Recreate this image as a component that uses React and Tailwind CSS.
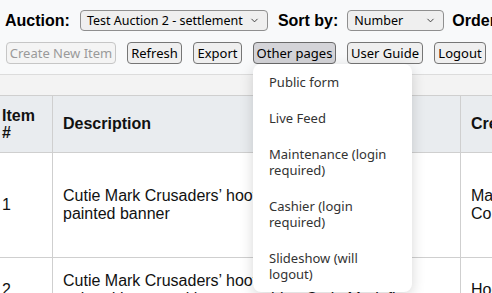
import React from 'react';
import { ChevronDown } from 'lucide-react';

const uiFont = { fontFamily: '"Noto Sans", "Open Sans", sans-serif' };

const FakeSelect = ({ value, width }) => (
  <div
    className={`flex h-[21px] items-center justify-between rounded-[4px] border border-[#8f8f8f] bg-[#efefef] pl-[6px] pr-[7px] text-[12.5px] leading-[19px] text-black ${width}`}
    style={uiFont}
  >
    <span className="whitespace-nowrap">{value}</span>
    <ChevronDown size={11} strokeWidth={2} className="shrink-0 text-[#333]" />
  </div>
);

const Button = ({ label, width, pressed, disabled }) => {
  let look = 'border-[#767676] bg-[#efefef] text-black';
  if (pressed) look = 'border-[#6b6b6b] bg-[#d4d4d8] text-black';
  if (disabled) look = 'border-[#c6c6c6] bg-[#f4f4f4] text-[#9a9a9a]';
  return (
    <button
      disabled={disabled}
      className={`flex h-[22px] shrink-0 items-center justify-center rounded-[4px] border text-[13px] leading-[20px] ${look} ${width}`}
      style={uiFont}
    >
      {label}
    </button>
  );
};

const menuItems = [
  'Public form',
  'Live Feed',
  'Maintenance (login required)',
  'Cashier (login required)',
  'Slideshow (will logout)',
];

const rows = [
  {
    id: 1,
    desc: 'Cutie Mark Crusaders’ hoofprint autographed painted\u00a0banner',
    creator: 'Mane Street Collectibles',
    height: 'h-[105px]',
  },
  {
    id: 2,
    desc: 'Cutie Mark Crusaders’ hoofprint autographed painted\u00a0banner with two matching Cutie Mark figures',
    creator: 'Hoofington',
    height: 'h-[64px]',
  },
];

export default function App() {
  return (
    <div
      className="relative h-[293px] w-[492px] overflow-hidden bg-white"
      style={{ fontFamily: '"Liberation Sans", Arial, sans-serif' }}
    >
      <div className="w-max min-w-full border-b border-[#dcdcdc] bg-[#f8f9fa] px-[5px] pt-[10px] pb-[10px]">
        <div className="flex items-center whitespace-nowrap leading-[21px]">
          <span className="text-[16px] font-bold text-black">Auction:</span>
          <div className="ml-[10px]">
            <FakeSelect value="Test Auction 2 - settlement" width="w-[188px]" />
          </div>
          <span className="ml-[10px] text-[16px] font-bold text-black">Sort by:</span>
          <div className="ml-[9px]">
            <FakeSelect value="Number" width="w-[97px]" />
          </div>
          <span className="ml-[8px] text-[16px] font-bold text-black">Order:</span>
          <div className="ml-[9px]">
            <FakeSelect value="Ascending" width="w-[97px]" />
          </div>
        </div>
        <div className="mt-[11px] flex gap-[11px] pl-[1px]">
          <Button label="Create New Item" width="w-[110px]" disabled />
          <Button label="Refresh" width="w-[55px]" />
          <Button label="Export" width="w-[49px]" />
          <Button label="Other pages" width="w-[83px]" pressed />
          <Button label="User Guide" width="w-[76px]" />
          <Button label="Logout" width="w-[52px]" />
        </div>
      </div>

      <div className="h-[20px] bg-[#f3f3f3]" />

      <table className="ml-[-9px] w-[630px] table-fixed border-collapse text-[16px] text-[#111]">
        <thead>
          <tr className="bg-[#e9ecef]">
            <th className="h-[57px] w-[61px] border border-[#cfcfcf] px-[10px] text-left align-middle leading-[17px] font-bold">
              Item #
            </th>
            <th className="w-[408px] border border-[#cfcfcf] px-[10px] text-left align-middle font-bold">
              Description
            </th>
            <th className="w-[161px] border border-[#cfcfcf] px-[10px] text-left align-middle font-bold">
              Creator
            </th>
          </tr>
        </thead>
        <tbody>
          {rows.map(row => (
            <tr key={row.id}>
              <td className={`${row.height} border border-[#cfcfcf] px-[10px] align-middle leading-[18px]`}>
                {row.id}
              </td>
              <td className="border border-[#cfcfcf] px-[10px] align-middle leading-[18px]">{row.desc}</td>
              <td className="border border-[#cfcfcf] px-[10px] align-middle leading-[18px]">{row.creator}</td>
            </tr>
          ))}
        </tbody>
      </table>

      <div
        className="absolute top-[64px] left-[253px] w-[159px] rounded-lg bg-white shadow-[0_4px_14px_rgba(0,0,0,0.16)]"
        style={uiFont}
      >
        {menuItems.map(item => (
          <div key={item} className="px-4 py-[10px] text-[13px] leading-[16px] text-[#333]">
            {item}
          </div>
        ))}
      </div>
    </div>
  );
}
